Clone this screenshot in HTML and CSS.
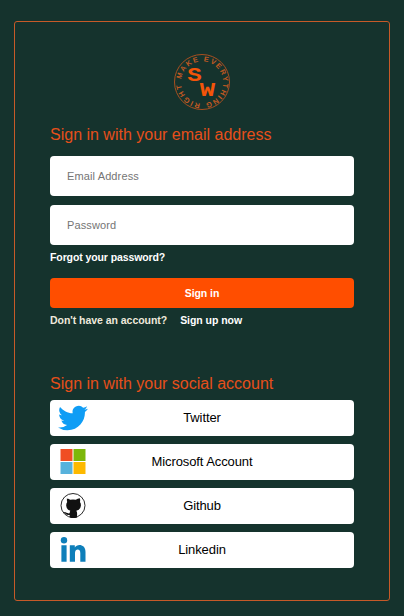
FILE: index.html
```html
<!DOCTYPE html>
<html lang="en">
<head>
<meta charset="utf-8">
<title>Sign in</title>
<link rel="stylesheet" href="styles.css">
</head>
<body>
<main class="card">
  <svg class="logo" width="58" height="58" viewBox="0 0 58 58" role="img" aria-label="SW">
    <defs><path id="ring" d="M8.3 26.3A21 21 0 1 1 8.1 30.7"/></defs>
    <circle class="logo-ring" cx="29" cy="29" r="27.5"/>
    <text class="logo-motto"><textPath href="#ring" textLength="126">MAKE EVERYTHING RIGHT</textPath></text>
    <text class="logo-letter" transform="translate(14.2 28) scale(1.15 .98)">S</text>
    <text class="logo-letter" transform="translate(26.8 43.3) scale(1.22 1)">W</text>
  </svg>
  <form class="login">
    <h2 class="heading">Sign in with your email address</h2>
    <input class="field" type="email" placeholder="Email Address">
    <input class="field" type="password" placeholder="Password">
    <a class="link forgot">Forgot your password?</a>
    <button class="submit" type="button">Sign in</button>
    <p class="signup"><span>Don't have an account?</span><a class="link">Sign up now</a></p>
  </form>
  <section class="social">
    <h2 class="heading">Sign in with your social account</h2>
    <button class="provider" type="button">
      <svg class="icon" width="30" height="30" viewBox="0 0 24 24"><path fill="#0f9df5" d="M23.95 4.57a10 10 0 0 1-2.82.77 4.96 4.96 0 0 0 2.16-2.72c-.95.55-2 .95-3.13 1.18a4.92 4.92 0 0 0-8.38 4.48C7.69 8.1 4.07 6.13 1.64 3.16a4.92 4.92 0 0 0 1.52 6.57 4.9 4.9 0 0 1-2.23-.61v.06c0 2.38 1.7 4.37 3.95 4.82a5 5 0 0 1-2.21.09 4.94 4.94 0 0 0 4.6 3.42A9.87 9.87 0 0 1 0 19.54a13.99 13.99 0 0 0 7.55 2.21c9.05 0 14-7.5 14-13.98 0-.21 0-.42-.02-.63a9.94 9.94 0 0 0 2.46-2.55z"/></svg>
      Twitter
    </button>
    <button class="provider" type="button">
      <svg class="icon" width="30" height="30" viewBox="0 0 30 30"><path fill="#f04e23" d="M2.5 2h12v12h-12z"/><path fill="#7cb70a" d="M15.5 2h12v12h-12z"/><path fill="#57b2dc" d="M2.5 15h12v12h-12z"/><path fill="#fdb900" d="M15.5 15h12v12h-12z"/></svg>
      Microsoft Account
    </button>
    <button class="provider" type="button">
      <svg class="icon" width="30" height="30" viewBox="0 0 30 30"><circle cx="15" cy="14.5" r="12" fill="#fff" stroke="#111" stroke-width=".9"/><path fill="#111" d="M8.200 7.300q2.100 0 4 1.500 2.800-.6 5.600 0 1.900-1.500 4-1.500.7 2 .1 3.800 1.200 1.400 1 3.600-.4 4.400-4.600 5 .8 1 .8 2.600v4.100q-4 1.200-7.400 0v-2.500c-3.800.6-4.200-2-6.200-2.700 2.400-.7 3.400 1.700 6.200 1.100q0-1.800 .6-2.600-3.700-.6-4.100-5-.1-2.200 1-3.600-.6-1.800-.1-3.800z"/></svg>
      Github
    </button>
    <button class="provider" type="button">
      <svg class="icon" width="30" height="30" viewBox="0 0 30 30"><g fill="#0e7fba"><circle cx="6" cy="5.2" r="3.2"/><path d="M3.400 10.300h5.200v16.500H3.400zM11.800 10.300h5v2.300c2.200-4.100 10.700-3.600 10.700 4.200v10h-5.200v-8.900c0-4.600-5.300-4.200-5.300 0v8.900h-5.200z"/></g></svg>
      Linkedin
    </button>
  </section>
</main>
</body>
</html>
```
FILE: styles.css
```css
* { box-sizing: border-box; }
body {
  margin: 0;
  padding: 21px 14px 15px;
  height: 616px;
  background: #15332d;
  font-family: "Liberation Sans", Arial, sans-serif;
}
.card {
  height: 580px;
  padding: 31px 35px 0;
  border: 1px solid #c65a28;
  border-radius: 3px;
}
.logo { display: block; margin: 0 auto; }
.logo-ring { fill: none; stroke: #a85020; stroke-width: 1; }
.logo-motto { fill: #c45a22; font-size: 7.3px; font-weight: bold; }
.logo-letter { fill: #f45509; font-family: "Liberation Mono", monospace; font-size: 21px; font-weight: bold; }
.login, .social { display: flex; flex-direction: column; }
.heading {
  margin: 0;
  color: #e64f1a;
  font-size: 16px;
  font-weight: normal;
  line-height: 20px;
}
.login .heading { margin: 14px 0 11px; }
.field {
  width: 100%;
  height: 40px;
  margin: 0 0 9px;
  padding: 0 17px;
  border: 0;
  border-radius: 4px;
  background: #fff;
  font: 11px "Liberation Sans", Arial, sans-serif;
  letter-spacing: .12px;
}
.field::placeholder { color: #757575; }
.link { color: #fff; }
.forgot { margin-top: -5px; }
.forgot, .signup {
  font-size: 10.5px;
  font-weight: bold;
  line-height: 16px;
  letter-spacing: -.1px;
}
.submit {
  height: 30px;
  margin-top: 13px;
  border: 0;
  border-radius: 4px;
  background: #ff4e00;
  color: #fff;
  font: bold 10.5px "Liberation Sans", Arial, sans-serif;
  letter-spacing: -.05px;
}
.signup {
  display: flex;
  gap: 13px;
  margin: 4px 0 0;
  color: #eee9dc;
  letter-spacing: -.04px;
}
.social { gap: 8px; margin-top: 46px; }
.social .heading { margin-bottom: -2px; }
.provider {
  position: relative;
  height: 36px;
  padding: 0 0 2px;
  border: 0;
  border-radius: 4px;
  background: #fff;
  color: #000;
  font: 13px "Liberation Sans", Arial, sans-serif;
  letter-spacing: -.1px;
}
.icon { position: absolute; left: 8px; top: 3px; }
```
